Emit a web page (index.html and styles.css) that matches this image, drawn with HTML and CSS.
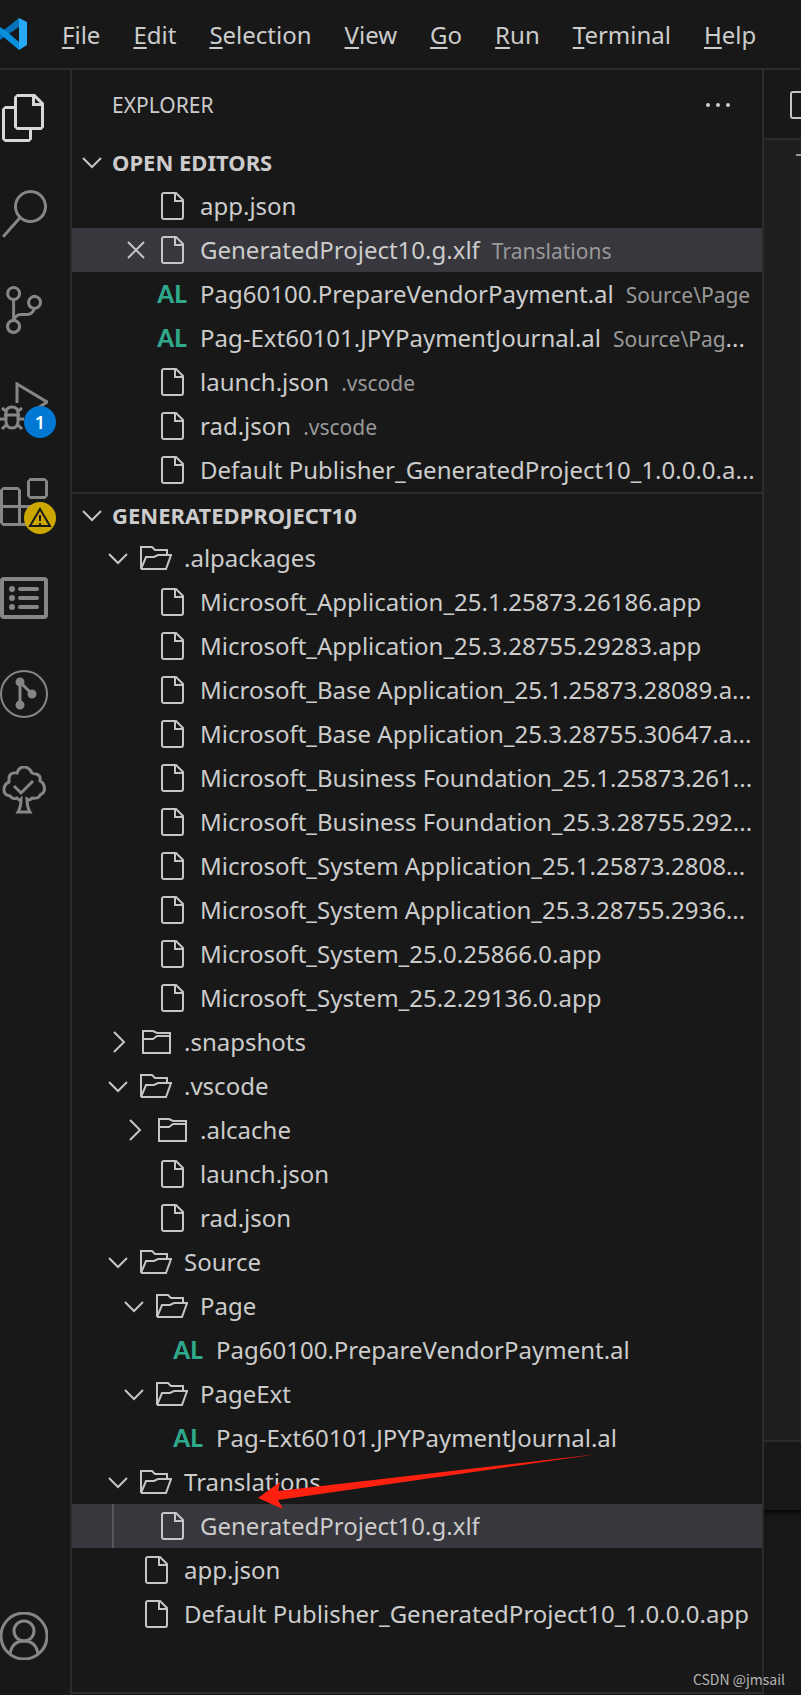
FILE: index.html
```html
<!DOCTYPE html>
<html lang="en">
<head>
<meta charset="utf-8">
<title>Explorer</title>
<link rel="stylesheet" href="styles.css">
</head>
<body>
<svg class="sprite" aria-hidden="true">
  <symbol id="file" viewBox="0 0 32 32"><path d="M8 3h12l7 7v17a2 2 0 0 1-2 2H8a2 2 0 0 1-2-2V5a2 2 0 0 1 2-2M19 3v8h8"/></symbol>
  <symbol id="open" viewBox="0 0 32 32"><path d="M1 27V5h11l3 3h12v6M1 27l5-12h8l4-2h13l-5 14H1"/></symbol>
  <symbol id="shut" viewBox="0 0 32 32"><path d="M3 5h10l4 2h13v20H3zM3 13h10l4-3h13"/></symbol>
  <symbol id="down" viewBox="0 0 32 32"><path d="M7 12l9 9 9-9"/></symbol>
  <symbol id="right" viewBox="0 0 32 32"><path d="M12 6l10 10-10 10"/></symbol>
  <symbol id="close" viewBox="0 0 32 32"><path d="M10 8l16 16M26 8L10 24"/></symbol>
</svg>
<header class="titlebar">
  <svg class="logo" viewBox="0 0 28 32" aria-hidden="true">
    <path fill="#0471b8" d="M0 15L19 0v9L0 22z"/>
    <path fill="#0890dc" d="M0 9l6 4 13 11v8L0 16z"/>
    <path fill="#27a9f5" d="M19 0l8 4v23l-8 5z"/>
  </svg>
  <nav class="menu" aria-label="Application menu">
    <button><u>F</u>ile</button><button><u>E</u>dit</button><button><u>S</u>election</button><button><u>V</u>iew</button><button><u>G</u>o</button><button><u>R</u>un</button><button><u>T</u>erminal</button><button><u>H</u>elp</button>
  </nav>
</header>
<div class="workbench">
  <nav class="activity" aria-label="Views">
    <button class="active" aria-label="Explorer"><svg viewBox="0 0 24 24"><path d="M17.500 0h-9L7 1.500V6H2.500L1 7.500v15.070L2.500 24h12.070L16 22.570V18h4.700l1.300-1.430V4.500L17.500 0zm0 2.120l2.380 2.380H17.500V2.120zm-3 20.380h-12v-15H7v9.070L8.500 18h6v4.500zm6-6h-12v-15H16V6h4.500v10.500z"/></svg></button>
    <button aria-label="Search"><svg viewBox="0 0 24 24"><path d="M15.250 0a8.250 8.250 0 0 0-6.180 13.720L1 22.880l1.120 1 8.050-9.120A8.251 8.251 0 1 0 15.250.010V0zm0 15a6.750 6.750 0 1 1 0-13.500 6.750 6.750 0 0 1 0 13.500z"/></svg></button>
    <button aria-label="Source Control"><svg viewBox="0 0 24 24"><path d="M21.007 8.222A3.738 3.738 0 0 0 15.045 5.200a3.737 3.737 0 0 0 1.156 6.583 2.988 2.988 0 0 1-2.668 1.670h-2.990a4.456 4.456 0 0 0-2.989 1.165V7.400a3.737 3.737 0 1 0-1.494 0v9.117a3.776 3.776 0 1 0 1.816.099 2.990 2.990 0 0 1 2.668-1.667h2.990a4.484 4.484 0 0 0 4.223-3.039 3.736 3.736 0 0 0 3.250-3.687zM4.565 3.738a2.242 2.242 0 1 1 4.484 0 2.242 2.242 0 0 1-4.484 0zm4.484 16.441a2.242 2.242 0 1 1-4.484 0 2.242 2.242 0 0 1 4.484 0zm8.221-9.715a2.242 2.242 0 1 1 0-4.485 2.242 2.242 0 0 1 0 4.485z"/></svg></button>
    <button aria-label="Run and Debug"><svg class="line" viewBox="0 0 48 48"><path d="M17 21V2l30 18-12 8M4 33h16M6 31v8q0 7 6 7t6-7v-8q0-6-6-6t-6 6M7 30L2 26M6 37H0M7 42l-5 5M17 30l5-4M18 37h6M17 42l5 5"/></svg><span class="badge">1</span></button>
    <button aria-label="Extensions"><svg viewBox="0 0 24 24"><path d="M13.500 1.500L15 0h7.500L24 1.500V9l-1.500 1.500H15L13.500 9V1.500zm1.500 0V9h7.500V1.500H15zM0 15V6l1.500-1.500H9L10.500 6v7.500H18l1.500 1.500v7.500L18 24H1.500L0 22.500V15zm9-1.500V6H1.500v7.500H9zM9 15H1.500v7.500H9V15zm1.500 7.500H18V15h-7.500v7.500z"/></svg><span class="badge warn"><svg viewBox="0 0 32 32"><path d="M16 7L6 24h20zM16 13v6M16 21v2"/></svg></span></button>
    <button aria-label="Outline list"><svg class="line" viewBox="0 0 48 48"><rect x="2" y="5" width="44" height="38" rx="2" stroke-width="4"/><path stroke-width="4" stroke-linecap="round" d="M20 15h17M20 24h17M20 33h17"/><path stroke-width="6" stroke-linecap="round" d="M12 15h0M12 24h0M12 33h0"/></svg></button>
    <button aria-label="Graph"><svg class="line" viewBox="0 0 48 48"><circle cx="24" cy="24" r="23" stroke-width="2"/><path d="M20 12v24M21 13l11 11"/><path stroke-width="9" stroke-linecap="round" d="M20 12h0M20 35h0M32 24h0"/></svg></button>
    <button aria-label="Tests"><svg class="line" viewBox="0 0 48 48"><path d="M18 46h12q-3-5-3-13 3 2 5-1 7 1 8-3 6-3 4-9 0-3-4-5 1-6-4-7-3 0-4-1-3-6-8-6t-7 6q-8-1-8 6v3q-5 2-5 8 0 5 6 6 3 4 7 2 2 3 4 1 0 8-3 13zM14 20l7 7 12-12"/></svg></button>
    <button class="account" aria-label="Accounts"><svg class="line" viewBox="0 0 48 48"><circle cx="24" cy="24" r="23"/><circle cx="24" cy="19" r="10"/><path d="M10 42q2-13 14-13t14 13"/></svg></button>
  </nav>
  <aside class="sidebar">
    <div class="viewtitle"><h2>EXPLORER</h2><button aria-label="More actions"><svg viewBox="0 0 32 32"><circle cx="6" cy="16" r="2"/><circle cx="16" cy="16" r="2"/><circle cx="26" cy="16" r="2"/></svg></button></div>
    <section>
      <button class="head"><svg class="ico"><use href="#down"/></svg>OPEN EDITORS</button>
      <ul>
        <li class="l2"><button class="row"><i class="slot"></i><svg class="ico"><use href="#file"/></svg><span class="label">app.json</span></button></li>
        <li class="l2 selected"><button class="slot" aria-label="Close editor"><svg class="ico"><use href="#close"/></svg></button><button class="row"><svg class="ico"><use href="#file"/></svg><span class="label">GeneratedProject10.g.xlf<small>Translations</small></span></button></li>
        <li class="l2"><button class="row"><i class="slot"></i><b class="al">AL</b><span class="label">Pag60100.PrepareVendorPayment.al<small>Source\Page</small></span></button></li>
        <li class="l2"><button class="row"><i class="slot"></i><b class="al">AL</b><span class="label">Pag-Ext60101.JPYPaymentJournal.al<small>Source\Pag</small>...</span></button></li>
        <li class="l2"><button class="row"><i class="slot"></i><svg class="ico"><use href="#file"/></svg><span class="label">launch.json<small>.vscode</small></span></button></li>
        <li class="l2"><button class="row"><i class="slot"></i><svg class="ico"><use href="#file"/></svg><span class="label">rad.json<small>.vscode</small></span></button></li>
        <li class="l2"><button class="row"><i class="slot"></i><svg class="ico"><use href="#file"/></svg><span class="label">Default Publisher_GeneratedProject10_1.0.0.0.a...</span></button></li>
      </ul>
    </section>
    <section class="project">
      <button class="head"><svg class="ico"><use href="#down"/></svg>GENERATEDPROJECT10</button>
      <ul>
        <li class="l1"><button class="row"><svg class="ico slot"><use href="#down"/></svg><svg class="ico"><use href="#open"/></svg><span class="label">.alpackages</span></button></li>
        <li class="l2"><button class="row"><i class="slot"></i><svg class="ico"><use href="#file"/></svg><span class="label">Microsoft_Application_25.1.25873.26186.app</span></button></li>
        <li class="l2"><button class="row"><i class="slot"></i><svg class="ico"><use href="#file"/></svg><span class="label">Microsoft_Application_25.3.28755.29283.app</span></button></li>
        <li class="l2"><button class="row"><i class="slot"></i><svg class="ico"><use href="#file"/></svg><span class="label">Microsoft_Base Application_25.1.25873.28089.a...</span></button></li>
        <li class="l2"><button class="row"><i class="slot"></i><svg class="ico"><use href="#file"/></svg><span class="label">Microsoft_Base Application_25.3.28755.30647.a...</span></button></li>
        <li class="l2"><button class="row"><i class="slot"></i><svg class="ico"><use href="#file"/></svg><span class="label">Microsoft_Business Foundation_25.1.25873.261...</span></button></li>
        <li class="l2"><button class="row"><i class="slot"></i><svg class="ico"><use href="#file"/></svg><span class="label">Microsoft_Business Foundation_25.3.28755.292...</span></button></li>
        <li class="l2"><button class="row"><i class="slot"></i><svg class="ico"><use href="#file"/></svg><span class="label">Microsoft_System Application_25.1.25873.2808...</span></button></li>
        <li class="l2"><button class="row"><i class="slot"></i><svg class="ico"><use href="#file"/></svg><span class="label">Microsoft_System Application_25.3.28755.2936...</span></button></li>
        <li class="l2"><button class="row"><i class="slot"></i><svg class="ico"><use href="#file"/></svg><span class="label">Microsoft_System_25.0.25866.0.app</span></button></li>
        <li class="l2"><button class="row"><i class="slot"></i><svg class="ico"><use href="#file"/></svg><span class="label">Microsoft_System_25.2.29136.0.app</span></button></li>
        <li class="l1"><button class="row"><svg class="ico slot"><use href="#right"/></svg><svg class="ico"><use href="#shut"/></svg><span class="label">.snapshots</span></button></li>
        <li class="l1"><button class="row"><svg class="ico slot"><use href="#down"/></svg><svg class="ico"><use href="#open"/></svg><span class="label">.vscode</span></button></li>
        <li class="l2"><button class="row"><svg class="ico slot"><use href="#right"/></svg><svg class="ico"><use href="#shut"/></svg><span class="label">.alcache</span></button></li>
        <li class="l2"><button class="row"><i class="slot"></i><svg class="ico"><use href="#file"/></svg><span class="label">launch.json</span></button></li>
        <li class="l2"><button class="row"><i class="slot"></i><svg class="ico"><use href="#file"/></svg><span class="label">rad.json</span></button></li>
        <li class="l1"><button class="row"><svg class="ico slot"><use href="#down"/></svg><svg class="ico"><use href="#open"/></svg><span class="label">Source</span></button></li>
        <li class="l2"><button class="row"><svg class="ico slot"><use href="#down"/></svg><svg class="ico"><use href="#open"/></svg><span class="label">Page</span></button></li>
        <li class="l3"><button class="row"><i class="slot"></i><b class="al">AL</b><span class="label">Pag60100.PrepareVendorPayment.al</span></button></li>
        <li class="l2"><button class="row"><svg class="ico slot"><use href="#down"/></svg><svg class="ico"><use href="#open"/></svg><span class="label">PageExt</span></button></li>
        <li class="l3"><button class="row"><i class="slot"></i><b class="al">AL</b><span class="label">Pag-Ext60101.JPYPaymentJournal.al</span></button></li>
        <li class="l1"><button class="row"><svg class="ico slot"><use href="#down"/></svg><svg class="ico"><use href="#open"/></svg><span class="label">Translations</span></button>
          <svg class="arrow" viewBox="0 0 340 56" aria-hidden="true"><path d="M0 44l22-16-2 9L340 0 20 46l5 9z"/></svg></li>
        <li class="l2 selected guide"><button class="row"><i class="slot"></i><svg class="ico"><use href="#file"/></svg><span class="label">GeneratedProject10.g.xlf</span></button></li>
        <li class="l1"><button class="row"><i class="slot"></i><svg class="ico"><use href="#file"/></svg><span class="label">app.json</span></button></li>
        <li class="l1"><button class="row"><i class="slot"></i><svg class="ico"><use href="#file"/></svg><span class="label">Default Publisher_GeneratedProject10_1.0.0.0.app</span></button></li>
      </ul>
    </section>
  </aside>
  <main class="editor">
    <div class="tabs"><svg class="ico"><use href="#file"/></svg></div>
    <div class="code"><i class="dash"></i></div>
    <div class="panelhead"></div>
    <div class="panel"></div>
  </main>
</div>
<div class="watermark">CSDN @jmsail</div>
</body>
</html>
```
FILE: styles.css
```css
* { box-sizing: border-box; }
body {
  margin: 0;
  min-height: 100vh;
  display: flex;
  flex-direction: column;
  overflow: hidden;
  position: relative;
  background: #181818;
  color: #cccccc;
  font: 24px/44px "Noto Sans", "Open Sans", sans-serif;
}
button { padding: 0; border: 0; background: none; color: inherit; font: inherit; text-align: left; }
ul { margin: 0; padding: 0; list-style: none; }
svg { display: block; flex: none; }
.sprite { width: 0; height: 0; position: absolute; }
.titlebar { height: 70px; border-bottom: 2px solid #2b2b2b; display: flex; align-items: center; }
.logo { width: 28px; height: 32px; }
.menu { display: flex; gap: 33px; margin-left: 34px; padding-top: 2px; }
.menu u { text-decoration-thickness: 2px; text-underline-offset: 3px; }
.workbench { flex: 1; display: flex; }
.activity { width: 72px; flex: none; border-right: 2px solid #2b2b2b; display: flex; flex-direction: column; padding-bottom: 11px; color: #868686; }
.activity button { height: 96px; width: 48px; display: flex; align-items: center; position: relative; }
.activity svg { width: 48px; height: 48px; fill: currentColor; }
.activity .line { fill: none; stroke: currentColor; stroke-width: 3; }
.activity .active { color: #d7d7d7; }
.activity .account { margin-top: auto; }
.badge { position: absolute; left: 24px; top: 48px; width: 32px; height: 32px; border-radius: 50%; background: #0078d4; color: #fff; font-size: 18px; font-weight: 600; line-height: 32px; text-align: center; }
.badge.warn { background: #cca700; color: #181818; }
.activity .badge svg { width: 32px; height: 32px; fill: none; stroke: currentColor; stroke-width: 2; }
.sidebar { flex: 1; min-width: 0; display: flex; flex-direction: column; padding-bottom: 1px; }
.viewtitle { height: 70px; padding: 0 28px 0 40px; display: flex; justify-content: space-between; align-items: center; }
.viewtitle h2 { margin: 0; font-size: 21px; font-weight: 400; }
.viewtitle svg { width: 32px; height: 32px; fill: #cccccc; }
.head { width: 100%; height: 44px; padding-left: 4px; display: flex; align-items: center; gap: 4px; font-size: 22px; font-weight: 700; }
.project { flex: 1; border-top: 2px solid #2b2b2b; border-bottom: 2px solid #2b2b2b; }
.project .head { height: 42px; }
.ico { width: 32px; height: 32px; fill: none; stroke: #c5c5c5; stroke-width: 2; }
li { height: 44px; display: flex; align-items: center; padding-right: 4px; position: relative; }
.l1 { padding-left: 30px; }
.l2 { padding-left: 46px; }
.l3 { padding-left: 62px; }
.selected { background: #37373d; }
.row { flex: 1; min-width: 0; display: flex; align-items: center; }
.slot { width: 32px; margin-right: 6px; flex: none; }
.al { width: 32px; flex: none; text-align: center; color: #2fa98c; font: 900 24px/44px Lato, sans-serif; }
.label { margin-left: 12px; overflow: hidden; text-overflow: ellipsis; white-space: nowrap; }
.label small { margin-left: 12px; font-size: 21px; color: #999999; }
.guide::before { content: ""; position: absolute; left: 40px; top: 0; bottom: 0; width: 2px; background: #585858; }
.arrow { position: absolute; left: 186px; top: -6px; width: 340px; height: 56px; fill: #ff2010; z-index: 1; }
.editor { width: 39px; flex: none; border-left: 2px solid #2b2b2b; display: flex; flex-direction: column; overflow: hidden; }
.tabs { height: 70px; flex: none; padding: 19px 0 0 21px; border-bottom: 2px solid #2b2b2b; }
.code { flex: 1; background: #1f1f1f; padding-top: 14px; }
.dash { display: block; height: 2px; margin-left: 32px; background: #999999; }
.panelhead { height: 70px; border-top: 2px solid #2b2b2b; }
.panel { height: 185px; box-shadow: inset 0 6px 6px -4px #000000; }
.watermark { position: absolute; right: 16px; bottom: 4px; font: 14px/24px "Noto Sans CJK SC", sans-serif; color: #b4b4b4; }
```
